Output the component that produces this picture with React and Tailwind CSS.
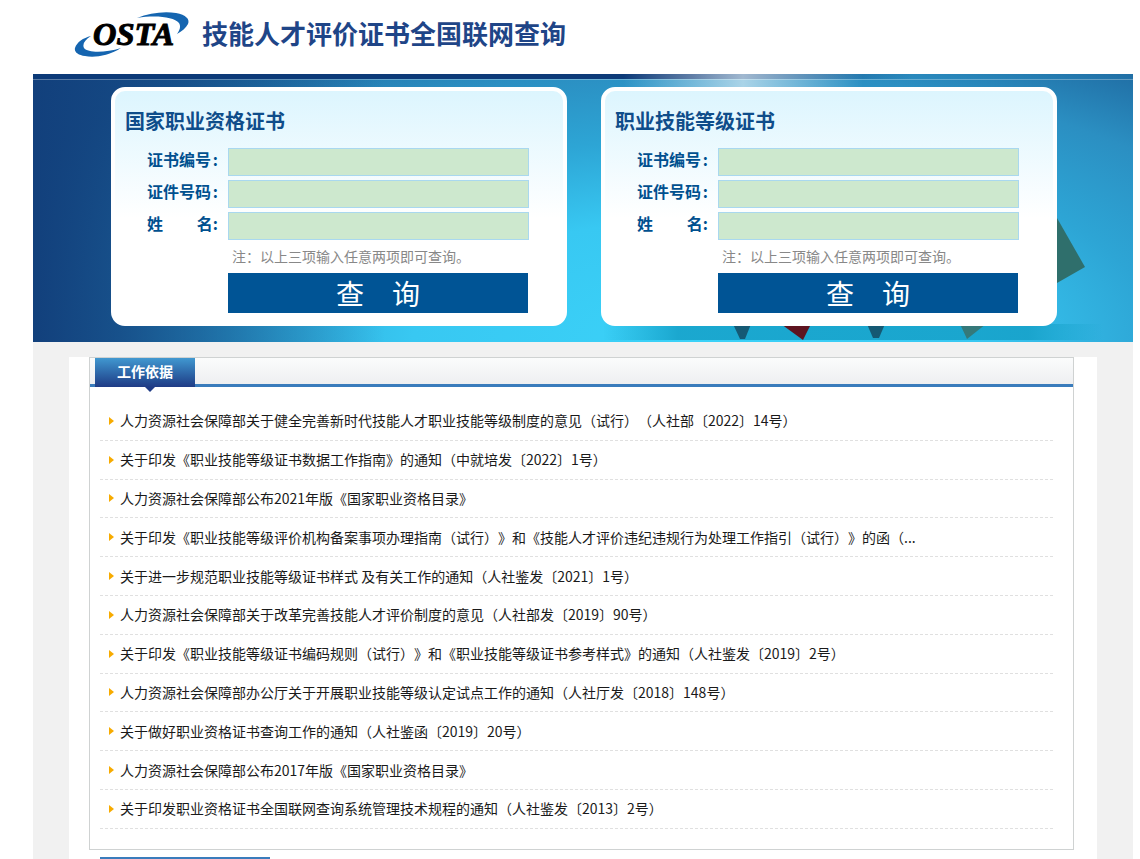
import { useState } from 'react';

const links = [
    '人力资源社会保障部关于健全完善新时代技能人才职业技能等级制度的意见（试行）（人社部〔2022〕14号）',
    '关于印发《职业技能等级证书数据工作指南》的通知（中就培发〔2022〕1号）',
    '人力资源社会保障部公布2021年版《国家职业资格目录》',
    '关于印发《职业技能等级评价机构备案事项办理指南（试行）》和《技能人才评价违纪违规行为处理工作指引（试行）》的函（...',
    '关于进一步规范职业技能等级证书样式 及有关工作的通知（人社鉴发〔2021〕1号）',
    '人力资源社会保障部关于改革完善技能人才评价制度的意见（人社部发〔2019〕90号）',
    '关于印发《职业技能等级证书编码规则（试行）》和《职业技能等级证书参考样式》的通知（人社鉴发〔2019〕2号）',
    '人力资源社会保障部办公厅关于开展职业技能等级认定试点工作的通知（人社厅发〔2018〕148号）',
    '关于做好职业资格证书查询工作的通知（人社鉴函〔2019〕20号）',
    '人力资源社会保障部公布2017年版《国家职业资格目录》',
    '关于印发职业资格证书全国联网查询系统管理技术规程的通知（人社鉴发〔2013〕2号）',
];

function Logo() {
    return (
        <svg width="116" height="46" viewBox="0 0 116 46" className="shrink-0">
            <path d="M1 37 C3 31 9 27 17 25 C11 29 8 33 10 37 C14 42 31 42 47 37 C34 45 20 47 11 45 C4 44 0 41 1 37 Z" fill="#1565b0" />
            <path d="M63 7 C75 2 90 0 102 2 C112 4 116 8 114 13 C112 17 108 20 103 23 C106 19 107 15 105 12 C100 6 82 4 63 7 Z" fill="#1565b0" />
            <text x="19" y="34" fontFamily="'Liberation Serif', serif" fontStyle="italic" fontWeight="700" fontSize="31" textLength="81" lengthAdjust="spacingAndGlyphs" fill="#000" stroke="#000" strokeWidth="1">OSTA</text>
        </svg>
    );
}

function Field({ label }) {
    const [value, setValue] = useState('');
    return (
        <div className="flex items-center h-[28px] mb-1">
            <label className="w-[113px] pl-[32px] pr-[10px] pb-[6px] shrink-0 text-[16px] leading-[24px] font-bold text-[#00508f] flex justify-between whitespace-nowrap">
                {label}
            </label>
            <input
                value={value}
                onChange={(e) => setValue(e.target.value)}
                className="w-[301px] h-[28px] bg-[#cde8ce] border border-[#a9d8ef] outline-none px-1"
            />
        </div>
    );
}

function QueryCard({ title }) {
    return (
        <div className="w-[456px] h-[239px] rounded-[14px] border-[4px] border-white bg-gradient-to-b from-[#dcf5fe] via-white via-[55%] to-white">
            <h2 className="pl-[10px] pt-[16px] h-[57px] text-[20px] leading-[27px] font-bold text-[#0f4d8a]">{title}</h2>
            <Field label={<><span>证书编号</span><span>:</span></>} />
            <Field label={<><span>证件号码</span><span>:</span></>} />
            <Field label={<><span>姓</span><span>名:</span></>} />
            <p className="ml-[117px] mt-[6px] h-[20px] text-[14px] leading-[20px] text-[#888] [text-spacing-trim:space-all]">注：以上三项输入任意两项即可查询。</p>
            <button className="ml-[113px] mt-[7px] w-[300px] h-[40px] bg-[#005495] text-white text-[28px] leading-[40px] flex justify-center gap-[28px]">
                <span>查</span>
                <span>询</span>
            </button>
        </div>
    );
}

function BannerArt() {
    return (
        <svg className="absolute inset-0 w-full h-full" viewBox="0 0 1100 268" preserveAspectRatio="none">
            <defs>
                <linearGradient id="shine" x1="0" y1="0" x2="1" y2="0">
                    <stop offset="0" stopColor="#fff" stopOpacity="0" />
                    <stop offset="0.5" stopColor="#fff" stopOpacity="0.6" />
                    <stop offset="1" stopColor="#fff" stopOpacity="0" />
                </linearGradient>
                <linearGradient id="band" x1="0" y1="0" x2="1" y2="0">
                    <stop offset="0" stopColor="#15a0c8" stopOpacity="0" />
                    <stop offset="0.15" stopColor="#15a0c8" stopOpacity="0.85" />
                    <stop offset="0.85" stopColor="#15a0c8" stopOpacity="0.85" />
                    <stop offset="1" stopColor="#15a0c8" stopOpacity="0" />
                </linearGradient>
                <linearGradient id="topdark" x1="0" y1="0" x2="1" y2="0">
                    <stop offset="0" stopColor="#0c3a78" />
                    <stop offset="0.6" stopColor="#0c3a78" />
                    <stop offset="0.8" stopColor="#0c3a78" stopOpacity="0" />
                </linearGradient>
            </defs>
            <rect x="0" y="0" width="1100" height="5" fill="url(#topdark)" />
            <rect x="0" y="5" width="1100" height="1" fill="#fff" opacity="0.3" />
            <rect x="590" y="0" width="240" height="14" fill="url(#shine)" />
            <rect x="570" y="250" width="500" height="16" fill="url(#band)" />
            <polygon points="1010,120 1024,144 1052,193 1024,209 1000,215" fill="#2f6f6c" />
            <polygon points="927,250 953,250 934,265" fill="#35797a" />
            <polygon points="748,250 778,250 770,266" fill="#5e1420" />
            <polygon points="700,250 718,250 712,265 707,265" fill="#14465c" opacity="0.8" />
            <polygon points="834,250 852,250 846,264 840,264" fill="#14465c" opacity="0.8" />
        </svg>
    );
}

export default function App() {
    return (
        <div className="w-[1133px] bg-white font-['Noto_Sans_CJK_SC','Liberation_Sans',sans-serif]">
            {/* Header */}
            <div className="h-[74px] pl-[74px] pt-[11px] flex items-start gap-[12px]">
                <Logo />
                <h1 className="pt-[4px] text-[26px] leading-[36px] font-bold text-[#1f4587] whitespace-nowrap">技能人才评价证书全国联网查询</h1>
            </div>

            <div className="ml-[33px] bg-[#f1f1f1]">
                {/* Banner */}
                <div className="relative h-[268px] overflow-hidden bg-[linear-gradient(90deg,#12407c_0%,rgba(18,64,124,0.8)_8%,rgba(18,64,124,0)_32%),radial-gradient(ellipse_800px_348px_at_60%_100%,#3bd2f8_0%,#38c8f2_35%,#2da5d5_58%,#2b8fc2_78%,#1e689f_98%,#1a5c96_115%)]">
                    <BannerArt />
                    <div className="relative flex gap-[34px] pl-[78px] pt-[13px]">
                        <QueryCard title="国家职业资格证书" />
                        <QueryCard title="职业技能等级证书" />
                    </div>
                </div>

                {/* Work basis */}
                <div className="mt-[15px] mx-[36px] bg-white pl-[20px] h-[502px]">
                    <div className="w-[985px] h-[493px] border border-[#cfd2d2]">
                        <div className="relative h-[29px] bg-gradient-to-b from-[#fbfcfc] to-[#eeeff1] border-b-[3px] border-[#3a7cbc]">
                            <div className="absolute left-[5px] top-0 w-[100px] h-[29px] bg-gradient-to-b from-[#4198d0] to-[#1f3b85] text-white text-[14px] font-bold leading-[27px] text-center">
                                工作依据
                            </div>
                            <div className="absolute left-[55px] top-[29px] w-0 h-0 border-x-[5px] border-x-transparent border-t-[5px] border-t-[#1f3b85]" />
                        </div>
                        <ul className="pt-[15px] pl-[10px] pr-[20px]">
                            {links.map((text) => (
                                <li key={text} className="h-[38.8px] pl-[9px] border-b border-dashed border-[#e0e0e0] flex items-center text-[14px] text-[#1a1a1a] whitespace-nowrap [text-spacing-trim:space-all]">
                                    <span className="w-0 h-0 mr-[6px] border-y-[4px] border-y-transparent border-l-[5px] border-l-[#f7ab00]" />
                                    <a href="#">{text}</a>
                                </li>
                            ))}
                        </ul>
                    </div>
                    <div className="mt-[7px] ml-[11px] w-[170px] h-[2px] bg-[#3a7cbc]" />
                </div>
            </div>
        </div>
    );
}
